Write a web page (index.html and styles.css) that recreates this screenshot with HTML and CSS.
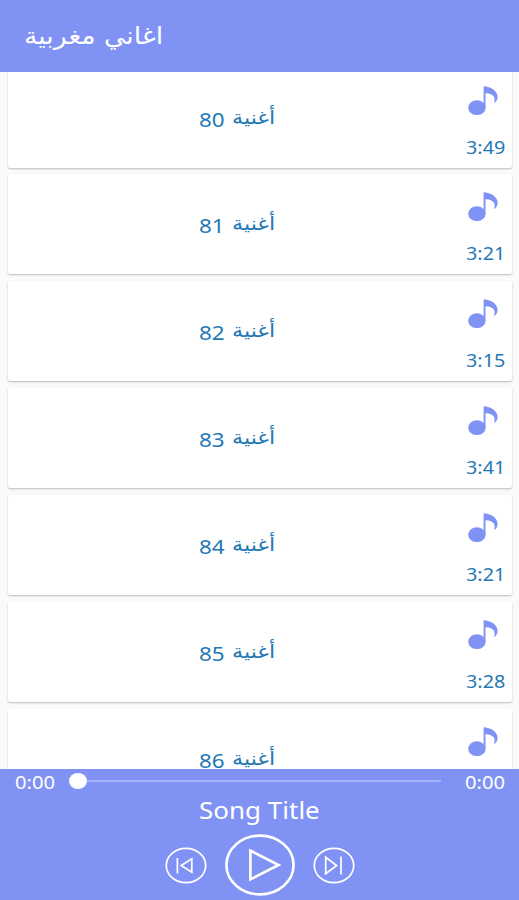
FILE: index.html
```
<!DOCTYPE html>
<html lang="ar">
<head>
  <meta charset="UTF-8">
  <meta name="viewport" content="width=device-width, initial-scale=1">
  <title>اغاني مغربية</title>
  <link rel="stylesheet" href="styles.css">
</head>
<body>
  <svg width="0" height="0" class="sprite">
    <symbol id="nota" viewBox="0 0 30 30">
      <ellipse cx="8.9" cy="21.7" rx="8.7" ry="7.4"/>
      <path d="M15.6 0.3C19 0.6 22.5 1.3 25.5 3.6C29.8 7 30.8 11.5 28.2 15.2C27.6 16.1 27 16.6 25.8 16.8C27.6 13 26.4 9.6 22.8 8.2C20.8 7.4 19 7.2 17.5 7.4V22H15.6Z"/>
    </symbol>
  </svg>

  <header class="barra">
    <h1>اغاني مغربية</h1>
  </header>

  <main class="lista" id="lista"></main>

  <footer class="reproductor">
    <div class="progreso">
      <span class="tiempo">0:00</span>
      <div class="pista"><span class="punto"></span></div>
      <span class="tiempo">0:00</span>
    </div>
    <div class="titulo"><span>Song Title</span></div>
    <div class="controles">
      <svg class="chico" viewBox="0 0 42 37">
        <ellipse cx="21" cy="18.5" rx="19.7" ry="17.2"/>
        <path d="M12.4 11V26.5M26.8 11.7V25.3L16.2 18.5Z"/>
      </svg>
      <svg class="grande" viewBox="0 0 70 62">
        <ellipse cx="35" cy="31" rx="33.6" ry="29.4"/>
        <path d="M25.4 16.6V45.4L53.6 31Z"/>
      </svg>
      <svg class="chico" viewBox="0 0 42 37">
        <ellipse cx="21" cy="18.5" rx="19.7" ry="17.2"/>
        <path d="M12.7 10.2V26.8L23.6 18.5ZM28 9.5V27.5"/>
      </svg>
    </div>
  </footer>

  <script>
    const canciones = [
      [80, "3:49"], [81, "3:21"], [82, "3:15"], [83, "3:41"],
      [84, "3:21"], [85, "3:28"], [86, ""]
    ];
    const lista = document.getElementById("lista");

    canciones.forEach(([numero, duracion]) => {
      const tarjeta = document.createElement("div");
      tarjeta.className = "tarjeta";
      tarjeta.innerHTML = `
        <div class="nombre"><span class="numero">${numero}</span><span class="palabra">أغنية</span></div>
        <div class="datos">
          <svg class="nota"><use href="#nota"/></svg>
          <span class="duracion">${duracion}</span>
        </div>`;
      lista.appendChild(tarjeta);
    });
  </script>
</body>
</html>
```
FILE: styles.css
```
:root {
  --azul: #8093f5;
  --texto: #2478b4;
  --fondo: #fafafa;
}

* {
  box-sizing: border-box;
}

body {
  margin: 0;
  height: 100vh;
  display: flex;
  flex-direction: column;
  overflow: hidden;
  background: var(--fondo);
  font-family: "Noto Sans", "DejaVu Sans", sans-serif;
}

.sprite {
  display: block;
  flex: none;
}

.barra {
  flex: none;
  height: 72px;
  padding: 0 24px;
  display: flex;
  align-items: center;
  background: var(--azul);
  color: #fff;
}

h1 {
  margin: 0;
  font: 400 24px/1 "DejaVu Sans", sans-serif;
  transform: scaleX(1.11);
  transform-origin: left;
}

.lista {
  flex: 1;
  min-height: 0;
  overflow: hidden;
  padding: 0 7px 0 8px;
}

.tarjeta {
  height: 100px;
  margin-bottom: 6.85px;
  display: flex;
  background: #fff;
  border-radius: 2px;
  box-shadow: 0 1px 2px rgba(0, 0, 0, 0.25);
}

/* la lista aparece desplazada */
.tarjeta:first-child {
  margin-top: -4.5px;
}

.nombre {
  flex: 1;
  display: flex;
  align-items: baseline;
  padding: 40px 0 0 191px;
  gap: 8px;
  color: var(--texto);
}

.numero {
  width: 25px;
  font-size: 20px;
  line-height: 24px;
  transform: scaleX(1.12);
  transform-origin: left;
}

.palabra {
  font: 19px/24px "DejaVu Sans", sans-serif;
  transform: translateY(-3px) scaleX(1.17);
  transform-origin: left;
}

.datos {
  width: 46px;
  display: flex;
  flex-direction: column;
}

.nota {
  width: 30px;
  height: 30px;
  margin: 18px 0 0 2px;
  fill: var(--azul);
}

.duracion {
  margin-top: 19px;
  font-size: 18px;
  line-height: 24px;
  color: var(--texto);
  transform: scaleX(1.1);
  transform-origin: left;
}

.reproductor {
  flex: none;
  height: 131px;
  background: var(--azul);
  color: #fff;
}

.progreso {
  height: 26px;
  padding: 0 14px 0 15px;
  display: flex;
  justify-content: space-between;
}

.tiempo {
  width: 40px;
  font-size: 18px;
  line-height: 27px;
  transform: scaleX(1.12);
  transform-origin: left;
}

.pista {
  width: 363px;
  height: 2px;
  margin: 11px 1px 0 0;
  background: #a5b2fa;
}

.punto {
  display: block;
  width: 18px;
  height: 16px;
  margin-top: -7px;
  margin-left: -9px;
  border-radius: 50%;
  background: #fff;
}

.titulo {
  height: 32px;
  text-align: center;
  font-size: 23px;
  line-height: 31px;
}

.titulo span {
  display: inline-block;
  transform: scaleX(1.13);
}

.controles {
  display: flex;
  justify-content: center;
  align-items: center;
  gap: 18px;
  padding-top: 7px;
}

.controles svg {
  fill: none;
  stroke: #fff;
}

.chico {
  width: 42px;
  height: 37px;
  stroke-width: 1.7;
}

.grande {
  width: 70px;
  height: 62px;
  stroke-width: 2.6;
}
```
